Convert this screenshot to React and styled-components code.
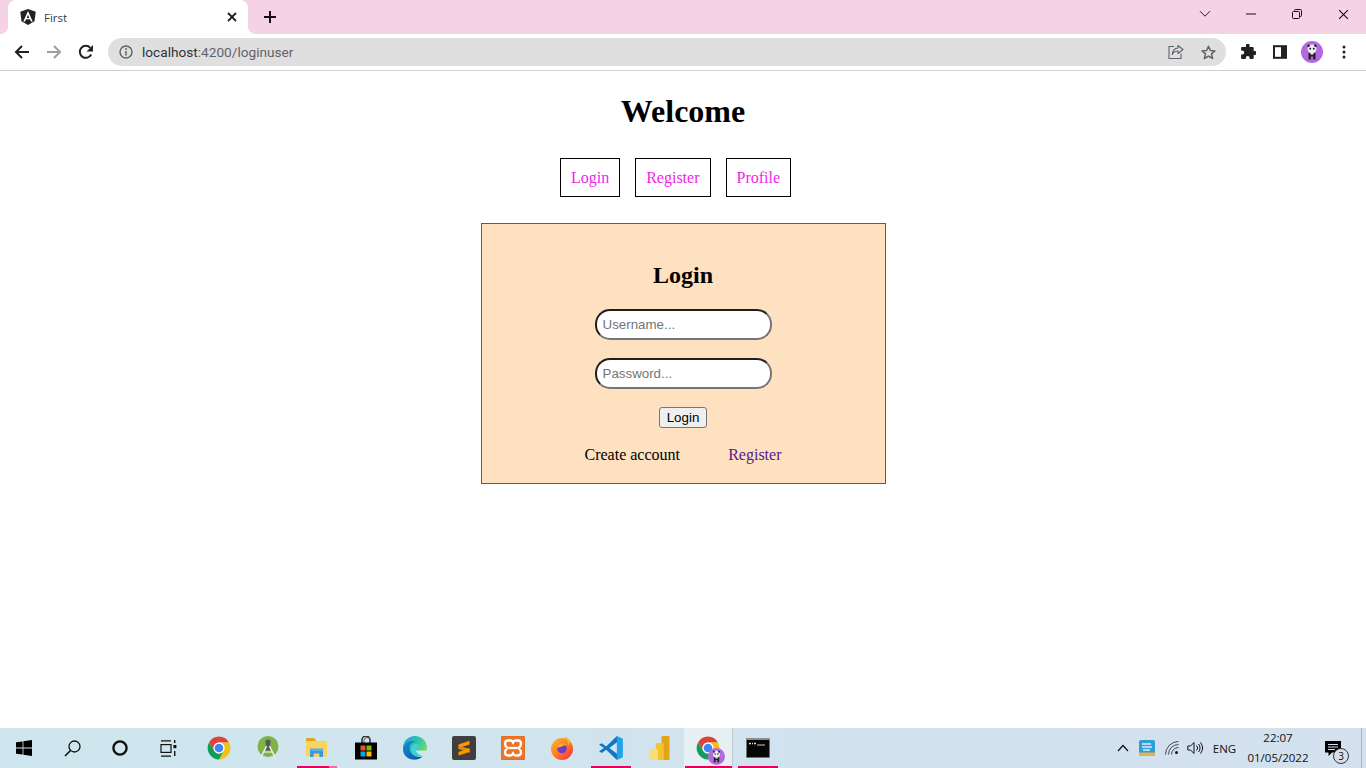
import React from "react";
import styled, { createGlobalStyle } from "styled-components";

const Global = createGlobalStyle`
  html, body { margin: 0; padding: 0; height: 100%; background: #fff; }
  body { font-family: "Liberation Serif", "Times New Roman", serif; overflow: hidden; }
  #root { height: 100%; }
`;

const Screen = styled.div`
  width: 1366px; height: 768px; display: flex; flex-direction: column; overflow: hidden; background: #fff;
`;

/* ---------- browser chrome ---------- */
const TabStrip = styled.div`
  height: 34px; background: #f5d3e5; display: flex; align-items: flex-start; flex: none; padding-left: 8px;
`;
const Tab = styled.div`
  position: relative; width: 240px; height: 34px; background: #fff; border-radius: 8px 8px 0 0;
  display: flex; align-items: center; padding: 0 8px 0 12px; box-sizing: border-box;
  &::before, &::after { content: ""; position: absolute; bottom: 0; width: 8px; height: 8px; }
  &::before { left: -8px; background: radial-gradient(circle at 0 0, #f5d3e5 8px, #fff 8.5px); }
  &::after { right: -8px; background: radial-gradient(circle at 100% 0, #f5d3e5 8px, #fff 8.5px); }
`;
const TabTitle = styled.span`
  flex: 1; margin-left: 8px; font: 11.5px "Open Sans", "Noto Sans", sans-serif; color: #3c4043;
`;
const IconSlot = styled.span`
  display: inline-flex; align-items: center; justify-content: center; flex: none;
  width: ${(p) => p.$w || 32}px; height: ${(p) => p.$h || 32}px;
`;
const NewTab = styled(IconSlot)`
  margin-left: 10px; height: 34px; width: 24px;
`;
const StripSpacer = styled.div`flex: 1;`;
const WindowControls = styled.div`
  display: flex; height: 28px; align-items: center;
`;
const WinBtn = styled(IconSlot)`width: 46px; height: 28px;`;

const Toolbar = styled.div`
  height: 36px; flex: none; background: #fff; border-bottom: 1px solid #cfcfcf; box-sizing: content-box;
  display: flex; align-items: center; padding-left: 6px;
`;
const Omnibox = styled.div`
  width: 1118px; height: 28px; border-radius: 14px; background: #dfdfdf; margin: 0 6px;
  display: flex; align-items: center; padding: 0 2px 0 6px; box-sizing: border-box;
`;
const Url = styled.div`
  flex: 1; margin-left: 4px; font: 13.65px Roboto, "Noto Sans", sans-serif; color: #5f6368;
  b { font-weight: 400; color: #303336; }
`;

/* ---------- page ---------- */
const Page = styled.main`
  flex: 1; min-height: 0; display: flex; flex-direction: column; align-items: center;
`;
const Heading = styled.h1`
  font-size: 32px; font-weight: 700; margin: 22px 0 0; line-height: 37px; color: #000;
`;
const Nav = styled.nav`
  display: flex; gap: 15px; margin-top: 28px; padding-right: 15px;
`;
const NavLink = styled.a`
  display: block; border: 1px solid #000; padding: 10px 10px 9px; font-size: 16px; line-height: 18px;
  color: #f01fe8; text-decoration: none;
`;
const Card = styled.section`
  width: 405px; height: 261px; box-sizing: border-box; margin-top: 26px; background: #fde1c0;
  border: 1px solid #8a2be2; display: flex; flex-direction: column; align-items: center;
`;
const CardTitle = styled.h2`
  font-size: 24px; font-weight: 700; margin: 38px 0 0; line-height: 27px; color: #000;
`;
const Field = styled.input`
  width: 177px; height: 31px; box-sizing: border-box; border-radius: 15px; border: 2px solid #767676;
  border-color: #1f1f1f #767676 #767676 #1f1f1f; background: #fff; padding: 0 5px 1px 6px;
  font: 13.33px "Liberation Sans", Arial, sans-serif; color: #000; margin-top: ${(p) => p.$mt}px; outline: none;
  &::placeholder { color: #757575; opacity: 1; }
`;
const SubmitBtn = styled.button`
  width: 48px; height: 21px; margin-top: 18px; padding: 0; box-sizing: border-box; background: #efefef;
  border: 1px solid #767676; border-radius: 3px; font: 13.33px "Liberation Sans", Arial, sans-serif; color: #000;
`;
const Foot = styled.div`
  display: flex; width: 197px; justify-content: space-between; margin-top: 18px; font-size: 16px; line-height: 18px;
`;
const FootText = styled.span`color: #000;`;
const FootLink = styled.a`color: #551a8b; text-decoration: none;`;

/* ---------- taskbar ---------- */
const Taskbar = styled.footer`
  height: 40px; flex: none; display: flex; align-items: stretch;
  background: linear-gradient(90deg, #cfe6ee 0%, #d1e4ee 45%, #d4e0ee 100%);
`;
const SysCell = styled.div`
  width: 48px; display: flex; align-items: center; justify-content: center; flex: none;
`;
const Apps = styled.div`display: flex; margin-left: 2px; flex: none;`;
const AppCell = styled.div`
  position: relative; width: 49px; display: flex; align-items: center; justify-content: center; flex: none;
  background: ${(p) => (p.$active ? "#e6eff4" : "transparent")};
  ${(p) => p.$active && "border-right: 1px solid #bcc8d2; box-sizing: border-box;"}
  &::after {
    content: ""; display: ${(p) => (p.$open ? "block" : "none")}; position: absolute; bottom: 0; height: 2px;
    left: ${(p) => (p.$active ? 1 : 5)}px; right: ${(p) => (p.$active ? 0 : 4)}px; background: #e6005e;
  }
`;
const FilesCell = styled(AppCell)`
  &::after { background: linear-gradient(90deg, #e6005e 80%, #f0739f 80%); }
`;
const Tray = styled.div`
  margin-left: auto; display: flex; align-items: center; flex: none; padding-right: 6px;
`;
const TraySlot = styled.div`
  display: flex; align-items: center; justify-content: center; flex: none; width: ${(p) => p.$w}px;
`;
const TrayText = styled.div`
  font: 11.5px "Open Sans", "Noto Sans", sans-serif; color: #111; width: ${(p) => p.$w}px; text-align: center; flex: none;
`;
const Clock = styled(TrayText)`line-height: 20px;`;
const Notify = styled.div`
  position: relative; width: 44px; height: 40px; display: flex; align-items: center; justify-content: center; flex: none;
`;
const Badge = styled.span`
  position: absolute; left: 22px; top: 20px; width: 16px; height: 16px; border-radius: 50%; border: 1px solid #333;
  background: #d3dfe9; font: 10px "Open Sans", sans-serif; color: #111; display: flex; align-items: center; justify-content: center;
  box-sizing: border-box;
`;
const DesktopEdge = styled.div`width: 1px; background: #aab6c0; flex: none;`;
const AppBadgeWrap = styled.span`position: relative; display: block; width: 24px; height: 24px;`;
const AppBadge = styled.span`position: absolute; right: -5px; bottom: -5px;`;

/* ---------- drawings ---------- */
const S = ({ w = 16, h, vb = "0 0 16 16", children }) => (
  <svg width={w} height={h || w} viewBox={vb} fill="none" style={{ display: "block" }}>{children}</svg>
);

const AngularIcon = () => (
  <S w={16} vb="0 0 16 16">
    <path d="M8 0 .3 2.7l1.2 9.6L8 16l6.5-3.700 1.200-9.600z" fill="#202124" />
    <path d="M8 2 3.300 12.600h1.800l.9-2.300h4l.9 2.300h1.800zM6.700 8.900 8 5.700l1.300 3.200z" fill="#fff" />
  </S>
);
const CloseX = ({ c = "#202124", w = 1.8, s = 10 }) => (
  <S w={s} vb="0 0 10 10"><path d="M1 1l8 8M9 1L1 9" stroke={c} strokeWidth={w} /></S>
);
const Plus = () => (
  <S w={12} vb="0 0 12 12"><path d="M6 0v12M0 6h12" stroke="#111" strokeWidth="2" /></S>
);
const Back = ({ c = "#202124" }) => (
  <S w={16} vb="0 0 16 16"><path d="M15 8H2M8 2 2 8l6 6" stroke={c} strokeWidth="2" /></S>
);
const Forward = () => (
  <S w={16} vb="0 0 16 16"><path d="M1 8h13M8 2l6 6-6 6" stroke="#9aa0a6" strokeWidth="2" /></S>
);
const Reload = () => (
  <S w={16} vb="0 0 16 16">
    <path d="M13.2 10.5A6 6 0 1 1 12.3 3.8" stroke="#202124" strokeWidth="2" />
    <path d="M15 1v6.4H8.6z" fill="#202124" />
  </S>
);
const Info = () => (
  <S w={14} vb="0 0 14 14">
    <circle cx="7" cy="7" r="6" stroke="#5f6368" strokeWidth="1.4" />
    <path d="M7 6v4.4" stroke="#5f6368" strokeWidth="1.5" />
    <circle cx="7" cy="4" r=".9" fill="#5f6368" />
  </S>
);
const Share = () => (
  <S w={16} vb="0 0 16 16">
    <path d="M6 2.5H1v12h12V9.5" stroke="#5f6368" strokeWidth="1.1" />
    <path d="M10 1.5l5 4-5 4V7C7.5 7 5.5 8 4.2 10.5 4.6 7 6.5 4.3 10 4z" stroke="#5f6368" strokeWidth="1.1" strokeLinejoin="round" />
  </S>
);
const Star = () => (
  <S w={15} vb="0 0 15 15">
    <path d="M7.5 1.2 9.4 5.5l4.6.4-3.5 3 1.1 4.6-4.1-2.4-4.1 2.4 1.1-4.6L1 5.9l4.6-.4z" stroke="#5f6368" strokeWidth="1.5" strokeLinejoin="round" />
  </S>
);
const Puzzle = () => (
  <S w={16} vb="0 0 16 16">
    <path d="M6 1.2a1.8 1.8 0 0 1 3.6.2V3h3.2c.5 0 .9.4.9.9v3h1a2 2 0 0 1 0 4h-1v3.2c0 .5-.4.9-.9.9H9.6v-1.2a1.9 1.9 0 0 0-3.8 0V15H2c-.5 0-.9-.4-.9-.9v-3.6h1.1a2 2 0 0 0 0-4H1.1V3.9c0-.5.4-.9.9-.9h4z" fill="#202124" />
  </S>
);
const SidePanel = () => (
  <S w={14} vb="0 0 14 14">
    <rect x="1" y="1.2" width="12" height="11.6" stroke="#202124" strokeWidth="2" />
    <rect x="8" y="1" width="5" height="12" fill="#202124" />
  </S>
);
const PandaFigure = () => (
  <>
    <circle cx="11" cy="8" r="4.4" fill="#f1eef2" />
    <circle cx="7.6" cy="4.8" r="1.3" fill="#222" />
    <circle cx="14.4" cy="4.8" r="1.3" fill="#222" />
    <circle cx="9.2" cy="7.8" r="1" fill="#222" />
    <circle cx="12.8" cy="7.8" r="1" fill="#222" />
    <path d="M7.5 12h7v6.5h-2.4v-3h-2.2v3H7.5z" fill="#222" />
    <rect x="9.6" y="11.4" width="2.8" height="2.2" fill="#eee" />
  </>
);
const Avatar = () => (
  <S w={22} vb="0 0 22 22">
    <circle cx="11" cy="11" r="11" fill="#b36ae0" />
    <PandaFigure />
  </S>
);
const Kebab = () => (
  <S w={4} h={14} vb="0 0 4 14">
    <circle cx="2" cy="2" r="1.5" fill="#202124" />
    <circle cx="2" cy="7" r="1.5" fill="#202124" />
    <circle cx="2" cy="12" r="1.5" fill="#202124" />
  </S>
);
const Chev = () => (
  <S w={12} h={8} vb="0 0 12 8"><path d="M1 1.2l5 5 5-5" stroke="#222" strokeWidth="1" /></S>
);
const Minimize = () => (<S w={10} h={2} vb="0 0 10 2"><path d="M0 1h10" stroke="#111" strokeWidth="1" /></S>);
const Restore = () => (
  <S w={10} vb="0 0 10 10">
    <rect x=".5" y="2.5" width="7" height="7" rx="1" stroke="#111" />
    <path d="M2.5 2.5V1.5a1 1 0 0 1 1-1h5a1 1 0 0 1 1 1v5a1 1 0 0 1-1 1h-1" stroke="#111" />
  </S>
);

const WinLogo = () => (
  <S w={16} vb="0 0 16 16">
    <path d="M0 2.3 6.6 1.4v6.2H0zM7.4 1.3 16 0v7.6H7.4zM0 8.4h6.6v6.2L0 13.7zM7.4 8.4H16V16l-8.6-1.3z" fill="#000" />
  </S>
);
const SearchIco = () => (
  <S w={17} vb="0 0 17 17">
    <circle cx="10.5" cy="6.5" r="5.5" stroke="#111" strokeWidth="1.3" />
    <path d="M6.5 10.5 1 16" stroke="#111" strokeWidth="1.6" />
  </S>
);
const Cortana = () => (
  <S w={16} vb="0 0 16 16"><circle cx="8" cy="8" r="6.6" stroke="#111" strokeWidth="2.4" /></S>
);
const TaskView = () => (
  <S w={17} vb="0 0 17 17">
    <path d="M1 .8h10M1 16.2h10" stroke="#111" strokeWidth="1.2" />
    <rect x="1" y="4.6" width="10" height="7.8" stroke="#111" strokeWidth="1.2" />
    <rect x="14" y="0" width="1.4" height="3" fill="#111" />
    <rect x="13.4" y="5" width="3" height="3.2" fill="#111" />
    <rect x="14" y="11" width="1.4" height="5" fill="#111" />
  </S>
);
const ChromeLogo = ({ s = 22 }) => (
  <S w={s} vb="0 0 24 24">
    <path d="M12 .5A11.500 11.500 0 0 1 22 6.500H12A5.500 5.500 0 0 0 7.240 14.750L2 6.500A11.500 11.500 0 0 1 12 .5Z" fill="#db4437" />
    <path d="M22 6.500A11.500 11.500 0 0 1 12 23.500L16.760 14.750A5.500 5.500 0 0 0 12 6.500Z" fill="#f4c20d" />
    <path d="M12 23.500A11.500 11.500 0 0 1 2 6.500L7.240 14.750A5.500 5.500 0 0 0 16.760 14.750Z" fill="#0f9d58" />
    <circle cx="12" cy="12" r="5.500" fill="#fff" />
    <circle cx="12" cy="12" r="4.300" fill="#4285f4" />
  </S>
);
const AndroidStudio = () => (
  <S w={22} h={24} vb="0 0 22 24">
    <circle cx="11" cy="10.500" r="10.500" fill="#7fb347" />
    <circle cx="11" cy="6" r="2.600" fill="#55595c" />
    <path d="M9 8h4l1.500 6.500h-7z" fill="#55595c" />
    <path d="M9.500 10 3 23.500M12.500 10 19 23.500" stroke="#e8ecec" strokeWidth="1.700" />
    <path d="M6 16h10" stroke="#e8ecec" strokeWidth="1.200" />
  </S>
);
const Files = () => (
  <S w={22} h={20} vb="0 0 22 20">
    <path d="M0 1.500C0 .7.5 0 1.300 0h6.500L10 2.200V4H0z" fill="#e2a521" />
    <rect x="0" y="3" width="21" height="15.500" rx="1" fill="#fbd35f" />
    <path d="M4 12h13v7h-3.600v-3.500H7.600V19H4z" fill="#3d97d9" />
    <rect x="4" y="10.500" width="13" height="2.500" fill="#54b0ea" />
  </S>
);
const Store = () => (
  <S w={24} h={24} vb="0 0 24 24">
    <path d="M8 7V4a4 4 0 0 1 8 0v3" stroke="#222" strokeWidth="1.400" />
    <path d="M10 7V4.500a3 3 0 0 1 6 0" stroke="#555" strokeWidth="1" />
    <rect x="1" y="6.500" width="22" height="17" fill="#000" />
    <rect x="6.500" y="9.500" width="5" height="5" fill="#f25022" />
    <rect x="12.500" y="9.500" width="5" height="5" fill="#7fba00" />
    <rect x="6.500" y="15.500" width="5" height="5" fill="#00a4ef" />
    <rect x="12.500" y="15.500" width="5" height="5" fill="#ffb900" />
  </S>
);
const Edge = () => (
  <S w={24} vb="0 0 24 24">
    <defs>
      <linearGradient id="edgeA" x1="0" y1="0" x2="1" y2=".6">
        <stop offset="0" stopColor="#1c9fe0" /><stop offset=".55" stopColor="#2fc5a8" /><stop offset="1" stopColor="#7ddb60" />
      </linearGradient>
      <linearGradient id="edgeB" x1="0" y1="0" x2="1" y2="1">
        <stop offset="0" stopColor="#1a8fd6" /><stop offset="1" stopColor="#0b53a0" />
      </linearGradient>
    </defs>
    <circle cx="12" cy="12" r="12" fill="url(#edgeA)" />
    <path d="M12 14.500H24.500V24H14C17 20 12 18 12 14.500z" fill="#d0e5ee" />
    <path d="M0 13C.5 7 7 3.500 13 5.500 9 5.800 6.500 8.500 6.500 12c0 6 6 10 13 8.500C15.500 25.500 0 25 0 13z" fill="url(#edgeB)" />
    <path d="M8.500 12.500C8.500 9 11 7.500 13.500 8c2 .4 3 2 2.500 3.500-1 .5-2.500.8-3.500 1.300.2 3 3 6 7 7.500-5.500 1.500-11.500-2-11.500-7.800z" fill="#42cfe0" />
  </S>
);
const Sublime = () => (
  <S w={24} vb="0 0 24 24">
    <rect width="24" height="24" rx="2" fill="#3f3f3f" />
    <path d="M17.500 4.800 6.500 8.400v3.600l11-3.600z" fill="#ff9800" />
    <path d="M6.500 9.500l11 3.600v3.600L6.500 13z" fill="#e88a00" />
    <path d="M17.500 12.300 6.500 15.900v3.600l11-3.600z" fill="#ff9800" />
  </S>
);
const Xampp = () => (
  <S w={24} vb="0 0 24 24">
    <rect width="24" height="24" rx="2.500" fill="#e9762b" stroke="#d9661f" />
    <path d="M7 4.500h2.500c1.500 0 2 1 2.500 2 .5-1 1-2 2.500-2H17c2 0 3 1.500 3 3.500s-1 3-2.500 4c1.500 1 2.500 2 2.500 4s-1 3.500-3 3.500h-2.500c-1.500 0-2-1-2.500-2-.5 1-1 2-2.500 2H7c-2 0-3-1.500-3-3.500s1-3 2.500-4C5 11 4 10 4 8s1-3.500 3-3.500z" stroke="#fff" strokeWidth="2.300" />
    <path d="M8 12h8" stroke="#fff" strokeWidth="2.300" />
  </S>
);
const Firefox = () => (
  <S w={24} vb="0 0 24 24">
    <defs>
      <linearGradient id="ffA" x1="0" y1="0" x2="1" y2="1">
        <stop offset="0" stopColor="#ffbd2e" /><stop offset=".5" stopColor="#ff7a1f" /><stop offset="1" stopColor="#f22a56" />
      </linearGradient>
    </defs>
    <circle cx="12" cy="13" r="11" fill="url(#ffA)" />
    <path d="M15 0c3 2 8 6 8 12 0-3-2-5-4-6 .6 2 .2 3-.8 3.500C18 6 16.500 3 15 0z" fill="#ffb52e" />
    <circle cx="12" cy="12.500" r="4.800" fill="#6f3dc4" />
    <path d="M7 12c0-3 2-5 5-5 2.500 0 4 1 5 3-2-1-4-.5-5 .5-1.500.5-3 1-5 1.500z" fill="#ffa02e" />
    <path d="M8 9.500c1.500-1 3-1 4.500-.5-1 1-2.500 1.500-4.500.5z" fill="#ffd44a" />
  </S>
);
const VSCode = () => (
  <S w={26} vb="0 0 24 24">
    <path d="M17.500 1 7.500 10.500l-4-3L1 9l4.500 3L1 15l2.500 1.500 4-3L17.500 23z" fill="#0a78c4" />
    <path d="M17.500 6.800 10.500 12l7 5.200z" fill="#d1e4ee" />
    <path d="M17.500 1 23 3.500v17L17.500 23z" fill="#23a3e6" />
  </S>
);
const PowerBI = () => (
  <S w={20} h={24} vb="0 0 20 24">
    <rect x="11.500" y="0" width="8" height="24" rx="1" fill="#e0a416" />
    <rect x="5.800" y="7" width="8" height="17" rx="1" fill="#f2c52e" />
    <rect x="0" y="13" width="8" height="11" rx="1" fill="#f8de78" />
  </S>
);
const ChromeProfile = () => (
  <AppBadgeWrap>
    <ChromeLogo s={24} />
    <AppBadge><S w={17} vb="0 0 22 22"><circle cx="11" cy="11" r="11" fill="#b36ae0" /><PandaFigure /></S></AppBadge>
  </AppBadgeWrap>
);
const Cmd = () => (
  <S w={24} h={20} vb="0 0 24 20">
    <rect width="24" height="20" fill="#8d8d8d" />
    <rect x=".8" y="2" width="22.400" height="17.200" fill="#060606" />
    <path d="M3 5.500h2M6 5.500h1M8 5.500h2" stroke="#ddd" strokeWidth="1.600" />
    <path d="M11 7h8" stroke="#ccc" strokeWidth="1" />
  </S>
);
const CaretUp = () => (<S w={12} h={8} vb="0 0 12 8"><path d="M1 7l5-5.500L11 7" stroke="#111" strokeWidth="1.200" /></S>);
const Defender = () => (
  <S w={16} vb="0 0 16 16">
    <rect width="16" height="16" rx="1.500" fill="#2f9fd8" />
    <path d="M0 12.500h16V16H0z" fill="#e8b24a" />
    <path d="M3 4h9M3 7h10M4 10h7" stroke="#d6f0fb" strokeWidth="1.400" />
  </S>
);
const Wifi = () => (
  <S w={14} vb="0 0 14 14">
    <path d="M.5 13.500A13 13 0 0 1 13.500 .500M3.500 13.500a10 10 0 0 1 10-10M6.500 13.500a7 7 0 0 1 7-7" stroke="#333" strokeWidth=".9" />
    <circle cx="11.500" cy="11.500" r="1.500" fill="#111" />
  </S>
);
const Speaker = () => (
  <S w={17} h={14} vb="0 0 17 14">
    <path d="M.8 5h2.700l3.500-3.500v11L3.500 9H.8z" stroke="#111" strokeWidth="1" />
    <path d="M9.500 4.500a3.500 3.500 0 0 1 0 5M11.500 3a6 6 0 0 1 0 8M13.500 1.500a9 9 0 0 1 0 11" stroke="#111" strokeWidth="1" />
  </S>
);
const NotifyIco = () => (
  <S w={16} h={15} vb="0 0 16 15">
    <path d="M0 0h16v11.500H7L3.500 15v-3.500H0z" fill="#000" />
    <path d="M3 3.500h10M3 6h10M3 8.500h7" stroke="#d3dfe9" strokeWidth="1" />
  </S>
);

export default function App() {
  return (
    <Screen>
      <Global />
      <TabStrip>
        <Tab>
          <AngularIcon />
          <TabTitle>First</TabTitle>
          <IconSlot $w={16} $h={16}><CloseX /></IconSlot>
        </Tab>
        <NewTab><Plus /></NewTab>
        <StripSpacer />
        <WindowControls>
          <WinBtn><Chev /></WinBtn>
          <WinBtn><Minimize /></WinBtn>
          <WinBtn><Restore /></WinBtn>
          <WinBtn><CloseX c="#111" w={1} s={11} /></WinBtn>
        </WindowControls>
      </TabStrip>
      <Toolbar>
        <IconSlot><Back /></IconSlot>
        <IconSlot><Forward /></IconSlot>
        <IconSlot><Reload /></IconSlot>
        <Omnibox>
          <IconSlot $w={24} $h={24}><Info /></IconSlot>
          <Url><b>localhost</b>:4200/loginuser</Url>
          <IconSlot $w={32} $h={24}><Share /></IconSlot>
          <IconSlot $w={32} $h={24}><Star /></IconSlot>
        </Omnibox>
        <IconSlot><Puzzle /></IconSlot>
        <IconSlot><SidePanel /></IconSlot>
        <IconSlot><Avatar /></IconSlot>
        <IconSlot><Kebab /></IconSlot>
      </Toolbar>

      <Page>
        <Heading>Welcome</Heading>
        <Nav>
          <NavLink>Login</NavLink>
          <NavLink>Register</NavLink>
          <NavLink>Profile</NavLink>
        </Nav>
        <Card>
          <CardTitle>Login</CardTitle>
          <Field $mt={20} placeholder="Username..." />
          <Field $mt={18} type="password" placeholder="Password..." />
          <SubmitBtn>Login</SubmitBtn>
          <Foot>
            <FootText>Create account</FootText>
            <FootLink>Register</FootLink>
          </Foot>
        </Card>
      </Page>

      <Taskbar>
        <SysCell><WinLogo /></SysCell>
        <SysCell><SearchIco /></SysCell>
        <SysCell><Cortana /></SysCell>
        <SysCell><TaskView /></SysCell>
        <Apps>
          <AppCell><ChromeLogo s={24} /></AppCell>
          <AppCell><AndroidStudio /></AppCell>
          <FilesCell $open><Files /></FilesCell>
          <AppCell><Store /></AppCell>
          <AppCell><Edge /></AppCell>
          <AppCell><Sublime /></AppCell>
          <AppCell><Xampp /></AppCell>
          <AppCell><Firefox /></AppCell>
          <AppCell $open><VSCode /></AppCell>
          <AppCell><PowerBI /></AppCell>
          <AppCell $open $active><ChromeProfile /></AppCell>
          <AppCell $open><Cmd /></AppCell>
        </Apps>
        <Tray>
          <TraySlot $w={26}><CaretUp /></TraySlot>
          <TraySlot $w={22}><Defender /></TraySlot>
          <TraySlot $w={28}><Wifi /></TraySlot>
          <TraySlot $w={18}><Speaker /></TraySlot>
          <TrayText $w={41}>ENG</TrayText>
          <Clock $w={66}>22:07<br />01/05/2022</Clock>
          <Notify><NotifyIco /><Badge>3</Badge></Notify>
        </Tray>
        <DesktopEdge />
        <TraySlot $w={4} />
      </Taskbar>
    </Screen>
  );
}
